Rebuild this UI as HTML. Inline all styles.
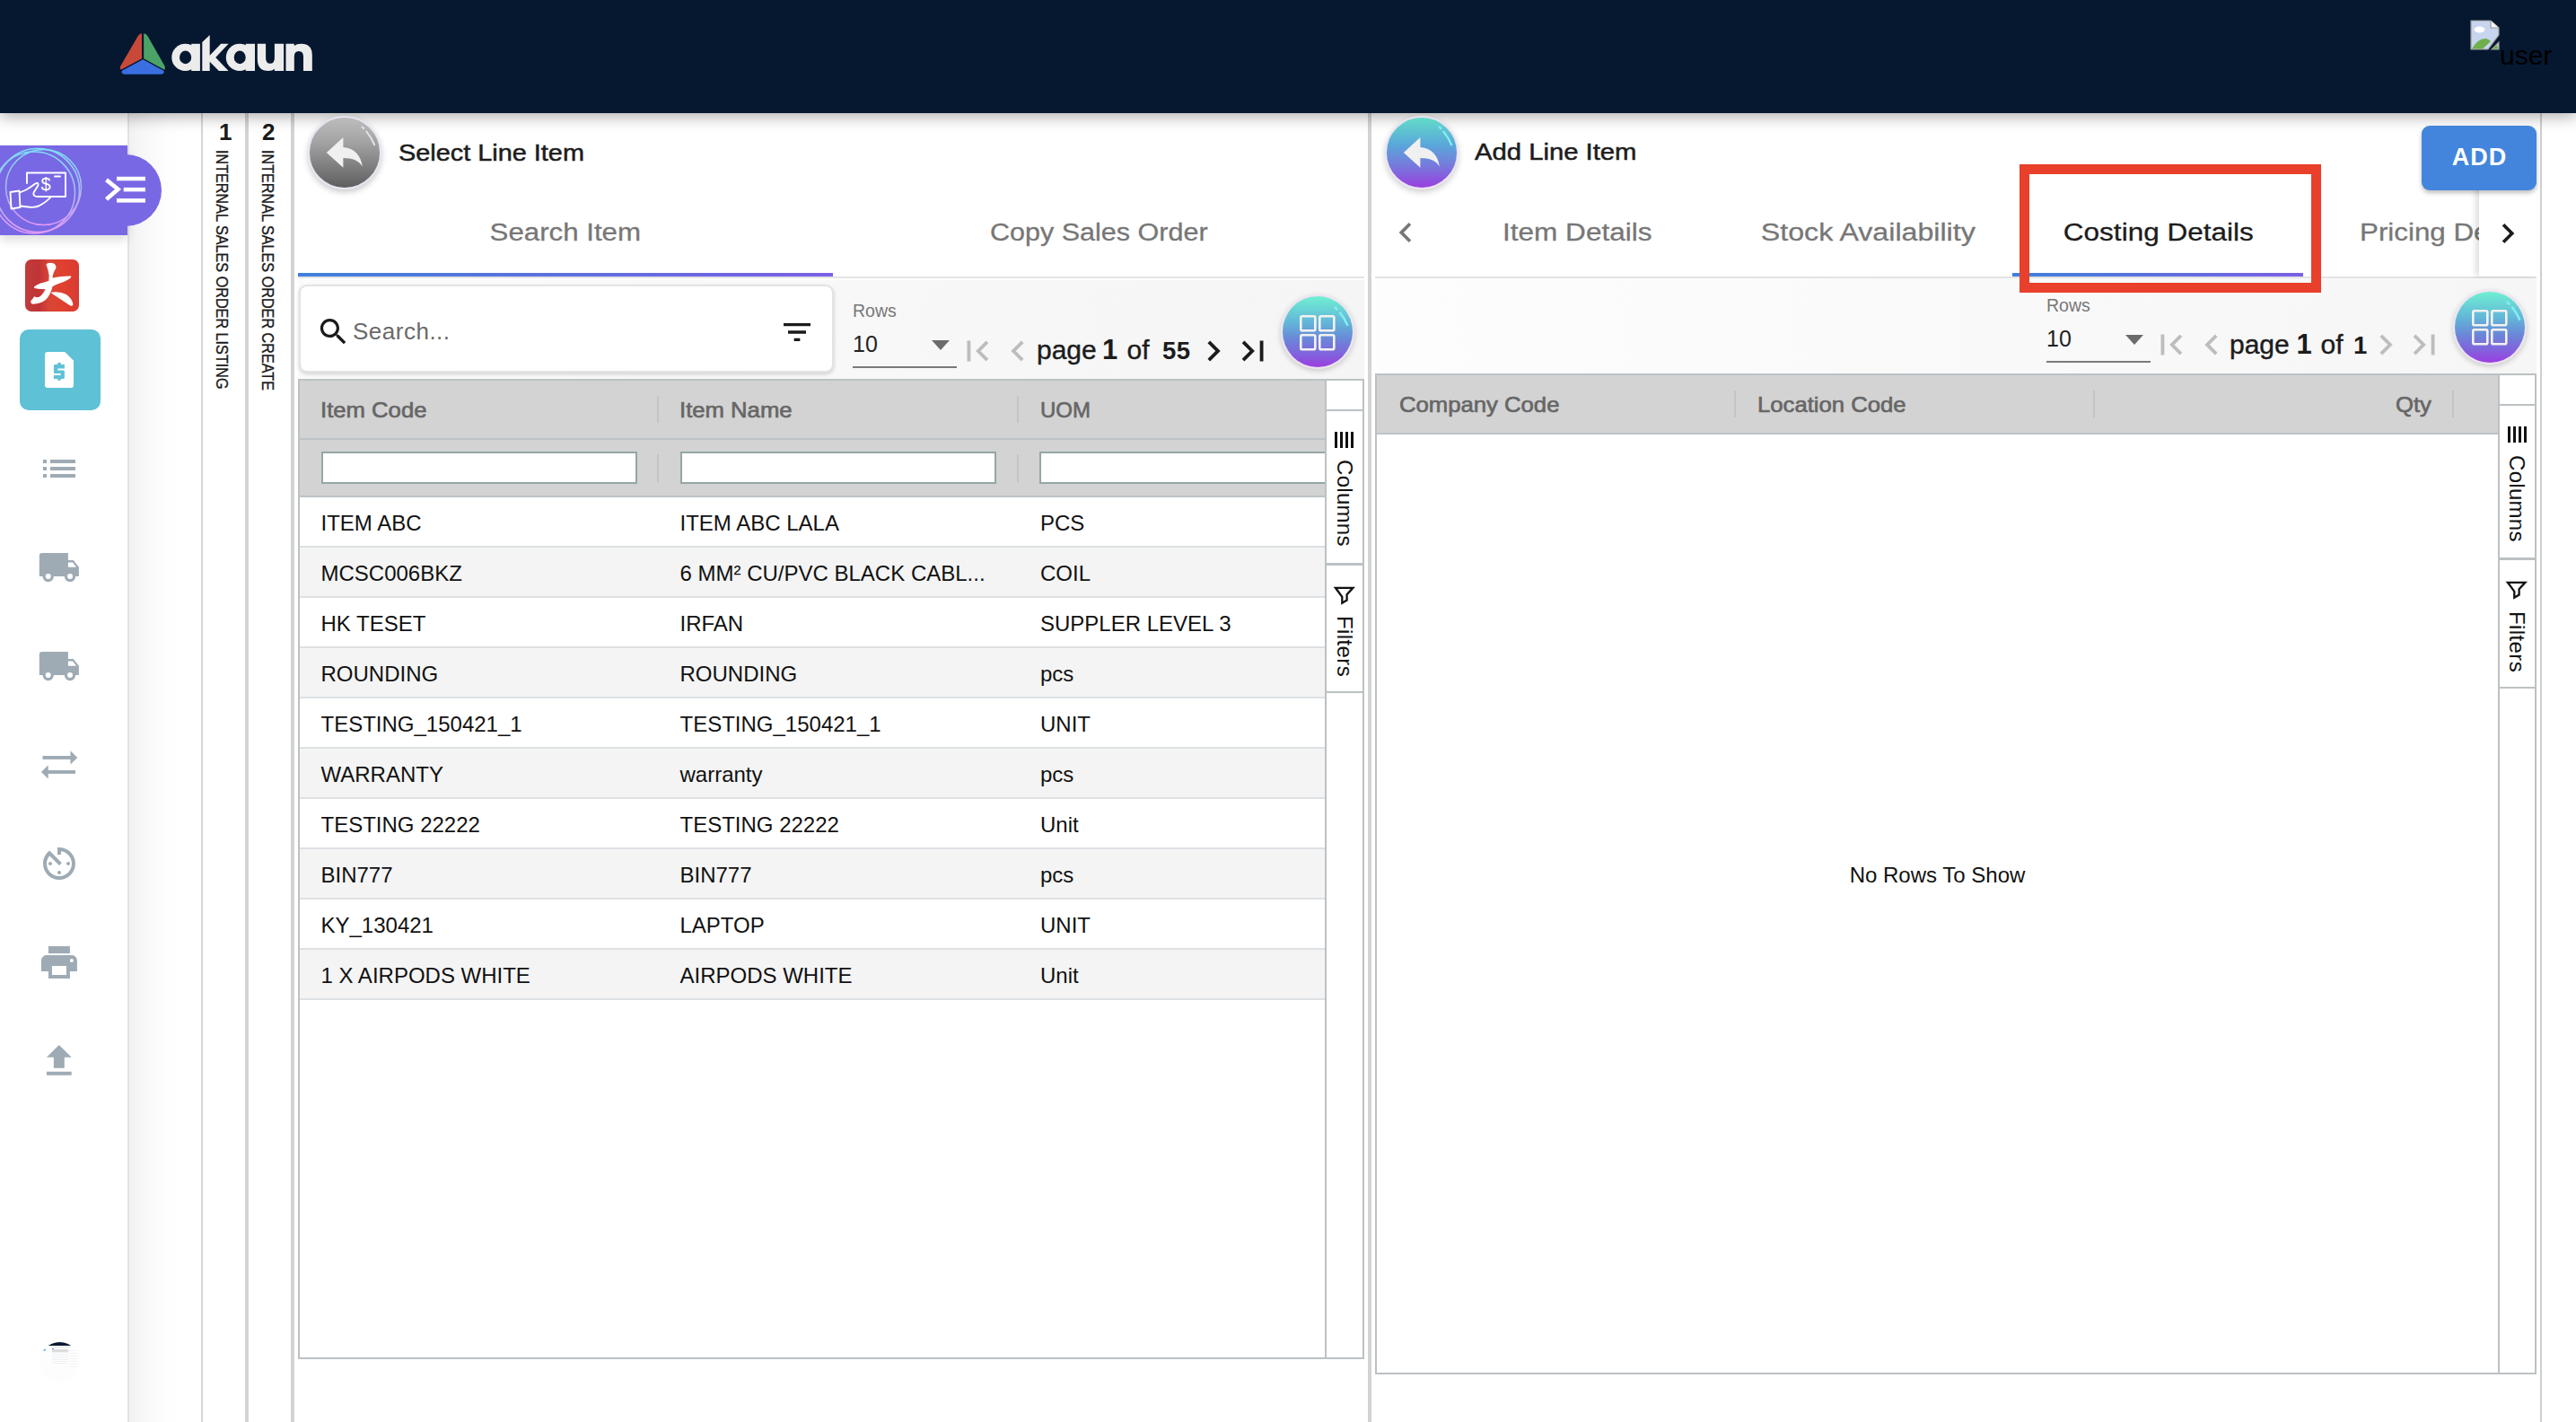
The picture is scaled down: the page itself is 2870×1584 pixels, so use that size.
<!DOCTYPE html>
<html><head><meta charset="utf-8">
<style>
*{box-sizing:border-box;margin:0;padding:0}
html,body{width:2870px;height:1584px;overflow:hidden;background:#fff;font-family:"Liberation Sans",sans-serif;position:relative}
.a{position:absolute}
.t{position:absolute;line-height:1;white-space:nowrap}
svg{display:block}
</style></head><body>

<!-- background columns -->
<div class="a" style="left:144px;top:126px;width:81px;height:1458px;background:linear-gradient(90deg,#f2f2f2 0,#f8f8f8 18px,#fdfdfd 40px,#fff 60px)"></div>
<div class="a" style="left:224px;top:126px;width:2px;height:1458px;background:#d6d6d6"></div>
<div class="a" style="left:273px;top:126px;width:4px;height:1458px;background:#d3d3d3"></div>
<div class="a" style="left:324px;top:126px;width:4px;height:1458px;background:#d3d3d3"></div>
<div class="a" style="left:1524px;top:126px;width:4px;height:1458px;background:#d3d3d3"></div>
<div class="a" style="left:2830px;top:126px;width:2px;height:1458px;background:#cfcfcf"></div>

<!-- sidebar -->
<div class="a" style="left:0;top:126px;width:144px;height:1458px;background:#fff;border-right:2px solid #e2e2e2"></div>

<!-- header -->
<div class="a" style="left:0;top:0;width:2870px;height:126px;background:#061830;box-shadow:0 4px 16px rgba(0,0,0,0.32)"></div>


<!-- logo -->
<svg class="a" style="left:125px;top:30px" width="235" height="60" viewBox="125 30 235 60">
<path fill="#c8493a" d="M158 37.2 L158 65.2 L135.2 77.6 Q133.3 77.2 134.2 73.8 L153.5 40.5 Q155.5 37.2 158 37.2 Z"/>
<path fill="#4ba466" d="M160.2 37.2 Q162.8 37.2 164.7 40.5 L183.6 73.8 Q184.4 77.2 182.8 77.6 L160.2 65.2 Z"/>
<path fill="#3a6fe2" d="M159.2 66.3 L182.3 78.7 Q183.5 80.2 182 81.8 Q180.8 82.8 178.5 82.8 H139.5 Q137.2 82.8 136.2 81.8 Q134.8 80.2 136 78.7 Z"/>
<g fill="#ececec" fill-rule="evenodd">
<circle cx="206.4" cy="63.9" r="15.1"/><rect x="213.2" y="48.8" width="9.7" height="30.2"/><ellipse cx="206.6" cy="63.9" rx="6.6" ry="7.3" fill="#061830"/>
<path d="M225.3 46.9 L233.7 39 V61.8 L246.2 48.8 H254.6 L240.2 64.1 L254.6 79 H243.9 L233.7 68.8 V79 H225.3 Z"/>
<circle cx="266.9" cy="63.9" r="15.1"/><rect x="273.7" y="48.8" width="10.3" height="30.2"/><ellipse cx="267.2" cy="63.9" rx="6.5" ry="7.3" fill="#061830"/>
<path d="M286.8 48.8 H296.1 V64.5 Q296.1 70.8 301 70.8 Q305.9 70.8 305.9 64.5 V48.8 H316.1 V79 H305.9 V76.8 Q303.5 79 299 79 Q286.8 79 286.8 66 Z"/>
<path d="M318.5 79 H327.8 V63.3 Q327.8 57 332.9 57 Q338 57 338 63.3 V79 H347.8 V61.5 Q347.8 48.8 335.5 48.8 Q330.5 48.8 327.8 51 V48.8 H318.5 Z"/>
</g>
</svg>
<!-- broken image + user -->
<svg class="a" style="left:2752px;top:22px" width="33" height="34" viewBox="0 0 33 34">
<path d="M1 1 H23 L32 9 V17 L20 33 H1 Z" fill="#c7d5ee" stroke="#9a9a9a" stroke-width="1.2"/>
<path d="M23 1 V9 H32" fill="#f4f4f4" stroke="#9a9a9a" stroke-width="1.2"/>
<path d="M24 33 L32 25 V33 Z" fill="#c7d5ee" stroke="#9a9a9a" stroke-width="1.2"/>
<ellipse cx="10.5" cy="11" rx="6" ry="3.5" fill="#fff"/>
<path d="M2 32.5 Q9 20 18 21 Q21 22 23 24 L14 32.5 Z" fill="#6faf4e"/>
<path d="M25 32.5 Q28 29 30 28 L31.5 32.5 Z" fill="#6faf4e"/>
</svg>
<div class="t" style="left:2785px;top:46.6px;font-size:30px;color:#000">user</div>


<!-- sidebar content -->
<div class="a" style="left:0;top:162px;width:142px;height:100px;background:#7868e4;box-shadow:0 6px 10px rgba(0,0,0,0.12)"></div>
<div class="a" style="left:100px;top:172px;width:80px;height:80px;background:#7868e4;border-radius:0 40px 40px 0"></div>
<svg class="a" style="left:0;top:162px" width="100" height="100" viewBox="0 0 100 100">
<defs><linearGradient id="rg" x1="0" y1="0" x2="0" y2="1"><stop offset="0" stop-color="#7fe0f8"/><stop offset="0.5" stop-color="#a8b8f4"/><stop offset="1" stop-color="#e49af6"/></linearGradient></defs>
<g fill="none" stroke="url(#rg)" stroke-width="1.6">
<circle cx="42" cy="50" r="46.5"/>
<circle cx="48.5" cy="46.5" r="42"/>
<circle cx="38" cy="52.5" r="45.5"/>
</g>
<g fill="none" stroke="#fff" stroke-width="1.9" stroke-linejoin="round" stroke-linecap="round">
<path d="M30 42 V30.5 H73 V57 H45"/>
<path d="M61 34.5 H67"/>
<path d="M11.5 52 L21.5 50.5 L22.5 69 L12.5 70.5 Z"/>
<path d="M22 52.5 L29 49.5 Q35 46 39.5 42.5 Q43 40.5 42.5 44.5 Q40 48.5 37.5 52.5 Q36.5 57 42 57 L57 57 Q52 63 43 67.5 Q38 69.5 31 68.5 L22.5 67.5"/>
</g>
<text x="45.5" y="50" font-family="Liberation Sans" font-size="20" fill="#fff">$</text>
</svg>
<svg class="a" style="left:117px;top:196px" width="46" height="32" viewBox="0 0 46 32">
<path d="M1.5 4.4 L14.5 14.8 L1.5 25.9" fill="none" stroke="#fff" stroke-width="4.6"/>
<rect x="13" y="0.8" width="32" height="4.5" fill="#fff"/>
<rect x="20.7" y="12.9" width="24.3" height="4.5" fill="#fff"/>
<rect x="13" y="25.1" width="32" height="4.5" fill="#fff"/>
</svg>

<!-- red app icon -->
<div class="a" style="left:28px;top:289px;width:60px;height:58px;border-radius:7px;background:linear-gradient(90deg,#c13c3b 0,#c03436 25%,#d84636 45%,#e0402f 70%,#d93b31 100%)"></div>
<svg class="a" style="left:28px;top:289px" width="60" height="58" viewBox="0 0 60 58">
<path fill="#fff" stroke="#fff" stroke-width="1.8" stroke-linejoin="round" d="M24.5 5.8 Q27 3.8 31 5 Q34 6.5 33.5 9.5 Q31 13 30 17 L29.6 21.8 Q38 19.2 50.5 19.3 Q48 22.5 39 25.5 Q33 27.5 29.8 29.5 Q27.5 39 22.5 44 Q17.5 48.5 8.5 48.8 Q6.5 48.2 7.3 46.5 Q9 45 10.5 42.3 Q12.5 44 16.5 42.3 Q21.5 39 24 31.5 Q17.5 32.8 10.8 31.2 Q14 28 20.5 26.6 L27.2 24.6 L27.6 17.5 Q26.5 10.5 24.5 5.8 Z"/><path fill="#fff" stroke="#fff" stroke-width="1.2" stroke-linejoin="round" d="M29.8 37.2 Q38.5 35.8 45.5 39.5 Q51.5 43.5 52.8 50 Q52.2 51.8 50.3 50.8 Q42 45.2 29.8 37.2 Z"/>
</svg>

<!-- active teal -->
<div class="a" style="left:22px;top:367px;width:90px;height:90px;border-radius:10px;background:#5ec1d6"></div>
<svg class="a" style="left:44px;top:388px" width="44" height="48" viewBox="44 388 44 48">
<path fill="#fff" d="M53 392 H72.3 L82 401.7 V429 Q82 432 79 432 H53 Q50 432 50 429 V395 Q50 392 53 392 Z"/>
<path fill="#5ec1d6" d="M64.3 404 H67.8 V405.9 H71.9 V410.4 H64.3 V412.4 H70.4 Q71.9 412.4 71.9 413.9 V420.4 Q71.9 421.9 70.4 421.9 H67.8 V423.7 H64.3 V421.9 H59.9 V417.9 H67.6 V416.1 H61.4 Q59.9 416.1 59.9 414.6 V407.4 Q59.9 405.9 61.4 405.9 H64.3 Z"/>
</svg>

<!-- gray sidebar icons -->
<svg class="a" style="left:42px;top:498px" width="48" height="48" viewBox="0 0 24 24"><path fill="#9eabb4" d="M3 13h2v-2H3v2zm0 4h2v-2H3v2zm0-8h2V7H3v2zm4 4h14v-2H7v2zm0 4h14v-2H7v2zM7 7v2h14V7H7z"/></svg>
<svg class="a" style="left:40px;top:612px" width="52" height="42" viewBox="0 0 52 42"><path fill="#9eabb4" d="M3.8 7 Q3.8 4 6.8 4 H35.9 V12 H41.8 L47.9 19.8 V29.9 H3.8 Z"/><path fill="#fff" d="M35.9 14.6 H41 L45 19.8 H35.9 Z"/><circle cx="13.7" cy="30" r="6.2" fill="#9eabb4"/><circle cx="38" cy="30" r="6.2" fill="#9eabb4"/><circle cx="13.7" cy="30" r="3" fill="#fff"/><circle cx="38" cy="30" r="3" fill="#fff"/></svg>
<svg class="a" style="left:40px;top:721.6px" width="52" height="42" viewBox="0 0 52 42"><path fill="#9eabb4" d="M3.8 7 Q3.8 4 6.8 4 H35.9 V12 H41.8 L47.9 19.8 V29.9 H3.8 Z"/><path fill="#fff" d="M35.9 14.6 H41 L45 19.8 H35.9 Z"/><circle cx="13.7" cy="30" r="6.2" fill="#9eabb4"/><circle cx="38" cy="30" r="6.2" fill="#9eabb4"/><circle cx="13.7" cy="30" r="3" fill="#fff"/><circle cx="38" cy="30" r="3" fill="#fff"/></svg>
<svg class="a" style="left:40px;top:830px" width="52" height="44" viewBox="40 830 52 44"><g fill="#9eabb4"><rect x="47.5" y="842" width="32" height="3.9"/><path d="M78.5 836.3 L86.2 843.95 L78.5 851.6 Z"/><rect x="53" y="858" width="31" height="3.9"/><path d="M53.7 852.3 L46 859.95 L53.7 867.6 Z"/></g></svg>
<svg class="a" style="left:42px;top:937.6px" width="48" height="48" viewBox="0 0 24 24"><path fill="#9eabb4" d="M11 17c0 .55.45 1 1 1s1-.45 1-1-.45-1-1-1-1 .45-1 1zm0-14v4h2V5.08c3.39.49 6 3.39 6 6.92 0 3.87-3.13 7-7 7s-7-3.13-7-7c0-1.68.59-3.22 1.58-4.42L12 13l1.41-1.41-6.8-6.8v.02C4.42 6.45 3 9.05 3 12c0 4.97 4.02 9 9 9 4.97 0 9-4.03 9-9s-4.03-9-9-9h-1zm7 9c0-.55-.45-1-1-1s-1 .45-1 1 .45 1 1 1 1-.45 1-1zM6 12c0 .55.45 1 1 1s1-.45 1-1-.45-1-1-1-1 .45-1 1z"/></svg>
<svg class="a" style="left:42px;top:1048px" width="47.9" height="47.9" viewBox="0 0 24 24"><path fill="#9eabb4" d="M19 8H5c-1.66 0-3 1.34-3 3v6h4v4h12v-4h4v-6c0-1.66-1.34-3-3-3zm-3 11H8v-5h8v5zm3-7c-.55 0-1-.45-1-1s.45-1 1-1 1 .45 1 1-.45 1-1 1zm-1-9H6v4h12V3z"/></svg>
<svg class="a" style="left:42.2px;top:1158.4px" width="47.6" height="47.6" viewBox="0 0 24 24"><path fill="#9eabb4" d="M9 16h6v-6h4l-7-7-7 7h4zm-4 2h14v2H5z"/></svg>

<!-- avatar -->
<div class="a" style="left:43.5px;top:1494.8px;width:45px;height:45px;border-radius:50%;overflow:hidden;background:#fdfdfd">
<div class="a" style="left:0;top:0;width:45px;height:4.3px;background:#0a1a34"></div>
<div class="a" style="left:14px;top:5px;width:20px;height:1.5px;background:#e3e6ea"></div>
<div class="a" style="left:2.5px;top:7.5px;width:4.5px;height:3px;border-radius:2px;background:#6cc6da"></div>
<div class="a" style="left:14px;top:7px;width:2px;height:2px;background:#6b9be2"></div>
<div class="a" style="left:14px;top:8.5px;width:18px;height:2.5px;background:#dcdcdc"></div>
<div class="a" style="left:14px;top:11px;width:18px;height:13px;background:repeating-linear-gradient(180deg,#eef0f4 0,#eef0f4 0.6px,#fff 0.6px,#fff 2px)"></div>
<div class="a" style="left:33px;top:9px;width:9px;height:20px;background:repeating-linear-gradient(180deg,#f1f2f4 0,#f1f2f4 0.6px,#fff 0.6px,#fff 3px)"></div>
</div>
<!-- vertical tabs -->
<div class="t" style="left:244px;top:134px;font-size:26px;font-weight:700;color:#1a1a1a">1</div>
<div class="t" style="left:292px;top:134px;font-size:26px;font-weight:700;color:#1a1a1a">2</div>
<div class="t" style="left:238px;top:167px;font-size:16.2px;color:#1a1a1a;writing-mode:vertical-rl;transform:scaleX(1.18);transform-origin:0 0;-webkit-text-stroke:0.3px #1a1a1a">INTERNAL SALES ORDER LISTING</div>
<div class="t" style="left:289px;top:167px;font-size:16.2px;color:#1a1a1a;writing-mode:vertical-rl;transform:scaleX(1.18);transform-origin:0 0;-webkit-text-stroke:0.3px #1a1a1a">INTERNAL SALES ORDER CREATE</div>


<!-- LEFT PANEL -->
<!-- back button -->
<div class="a" style="left:343px;top:129px;width:82px;height:82px;border-radius:50%;background:linear-gradient(180deg,#bdbdbd 0%,#a3a3a3 35%,#808080 68%,#5e5e5e 100%);border:2.5px solid #e9e3f1;box-shadow:0 3px 7px rgba(0,0,0,0.22)"></div>
<svg class="a" style="left:345px;top:131px" width="79" height="79" viewBox="0 0 79 79">
<path d="M58 10 Q67 18 72.5 31" fill="none" stroke="#e2e2e2" stroke-width="2" stroke-dasharray="4 3 40"/>
<path d="M37.4 22 L18.8 38.9 L37.4 55.8 V44.9 C48 44.9 55 48 58.8 54.4 C57 42 50 34 37.4 33 Z" fill="#f0f0f0"/>
</svg>
<div class="t" style="left:444px;top:156.5px;font-size:26px;color:#1c1c1c;-webkit-text-stroke:0.5px #1c1c1c;transform:scaleX(1.11);transform-origin:0 0">Select Line Item</div>

<!-- tabs -->
<div class="t" style="left:332px;top:246.1px;width:596px;text-align:center;font-size:27px;color:#777;-webkit-text-stroke:0.3px #777"><span style="display:inline-block;transform:scaleX(1.157)">Search Item</span></div>
<div class="t" style="left:928px;top:246.1px;width:592px;text-align:center;font-size:27px;color:#777;-webkit-text-stroke:0.3px #777"><span style="display:inline-block;transform:scaleX(1.130)">Copy Sales Order</span></div>
<div class="a" style="left:332px;top:308px;width:1188px;height:2px;background:#e3e3e3"></div>
<div class="a" style="left:332px;top:304px;width:596px;height:4px;background:linear-gradient(90deg,#3f80dc,#7b5fe6)"></div>

<!-- paginator area -->
<div class="a" style="left:332px;top:312px;width:1188px;height:110px;background:linear-gradient(90deg,#fbfbfb,#f5f5f5)"></div>
<div class="a" style="left:333px;top:317px;width:596px;height:98px;background:#fff;border-radius:9px;border:2px solid #e3e3e3;box-shadow:0 2px 4px rgba(0,0,0,0.16)"></div>
<svg class="a" style="left:352px;top:349.5px" width="39" height="39" viewBox="0 0 24 24"><path fill="#1a1a1a" d="M15.5 14h-.79l-.28-.27C15.41 12.59 16 11.11 16 9.5 16 5.91 13.09 3 9.5 3S3 5.91 3 9.5 5.91 16 9.5 16c1.61 0 3.09-.59 4.23-1.57l.27.28v.79l5 4.99L20.49 19l-4.99-5zm-6 0C7.01 14 5 11.99 5 9.5S7.01 5 9.5 5 14 7.01 14 9.5 11.99 14 9.5 14z"/></svg>
<div class="t" style="left:393px;top:355.5px;font-size:26px;color:#6a6a6a;letter-spacing:0.5px">Search...</div>
<svg class="a" style="left:868px;top:350px" width="40" height="40" viewBox="0 0 24 24"><path fill="#1a1a1a" d="M10 18h4v-2h-4v2zM3 6v2h18V6H3zm3 7h12v-2H6v2z"/></svg>

<div class="t" style="left:950px;top:336.8px;font-size:19.5px;color:#777">Rows</div>
<div class="t" style="left:950px;top:370.7px;font-size:25px;color:#222">10</div>
<svg class="a" style="left:1038px;top:379px" width="20" height="11" viewBox="0 0 20 11"><path d="M0 0 H20 L10 11 Z" fill="#6b6b6b"/></svg>
<div class="a" style="left:950px;top:408px;width:116px;height:2px;background:#7a7a7a"></div>
<svg class="a" style="left:1066px;top:368px" width="46" height="46" viewBox="0 0 24 24"><path fill="#bdbdbd" d="M18.41 16.59L13.82 12l4.59-4.59L17 6l-6 6 6 6zM6 6h2v12H6z"/></svg>
<svg class="a" style="left:1111px;top:368px" width="46" height="46" viewBox="0 0 24 24"><path fill="#bdbdbd" d="M15.41 7.41L14 6l-6 6 6 6 1.41-1.41L10.83 12z"/></svg>
<div class="t" style="left:1155px;top:374.6px;font-size:30px;color:#1c1c1c;-webkit-text-stroke:0.4px #1c1c1c">page</div>
<div class="t" style="left:1228px;top:373.8px;font-size:31px;font-weight:700;color:#1c1c1c">1</div>
<div class="t" style="left:1255.5px;top:374.6px;font-size:30px;color:#1c1c1c;-webkit-text-stroke:0.4px #1c1c1c">of</div>
<div class="t" style="left:1295px;top:377.1px;font-size:27.5px;font-weight:700;color:#1c1c1c;letter-spacing:0.5px">55</div>
<svg class="a" style="left:1328.5px;top:368px" width="46" height="46" viewBox="0 0 24 24"><path fill="#1c1c1c" d="M10 6L8.59 7.41 13.17 12l-4.58 4.59L10 18l6-6z"/></svg>
<svg class="a" style="left:1372.5px;top:368px" width="46" height="46" viewBox="0 0 24 24"><path fill="#1c1c1c" d="M5.59 7.41L10.18 12l-4.59 4.59L7 18l6-6-6-6zM16 6h2v12h-2z"/></svg>

<!-- grid fab -->
<div class="a" style="left:1427px;top:328px;width:82px;height:83px;border-radius:50%;background:linear-gradient(180deg,#70f0d2 0%,#62b4d8 38%,#6a88d8 60%,#7f66dc 80%,#9c3ee0 100%);border:2.5px solid #ebe4f1;box-shadow:0 2px 6px rgba(0,0,0,0.2)"></div>
<svg class="a" style="left:1428px;top:331px" width="80" height="80" viewBox="0 0 80 80">
<path d="M58.8 11 Q68 19 73.6 31.7" fill="none" stroke="#86ecf2" stroke-width="2.5" stroke-dasharray="5 3 40"/>
<g fill="none" stroke="#f5f2f0" stroke-width="2.6"><rect x="21.3" y="21.3" width="16" height="16" rx="1.5"/><rect x="42.3" y="21.3" width="16" height="16" rx="1.5"/><rect x="21.3" y="42.3" width="16" height="16" rx="1.5"/><rect x="42.3" y="42.3" width="16" height="16" rx="1.5"/></g>
</svg>

<!-- table -->
<div class="a" style="left:332px;top:422px;width:1188px;height:1092px;border:2px solid #bcc1c4;background:#fff"></div>
<div class="a" style="left:334px;top:424px;width:1143px;height:128px;background:#d3d3d3"></div>
<div class="a" style="left:334px;top:488px;width:1143px;height:2px;background:#bcc3c6"></div>
<div class="a" style="left:334px;top:552px;width:1143px;height:2px;background:#bcc3c6"></div>
<div class="a" style="left:732px;top:441px;width:2px;height:30px;background:#c4c4c4"></div>
<div class="a" style="left:1133px;top:441px;width:2px;height:30px;background:#c4c4c4"></div>
<div class="a" style="left:732px;top:506px;width:2px;height:31px;background:#c4c4c4"></div>
<div class="a" style="left:1133px;top:506px;width:2px;height:31px;background:#c4c4c4"></div>
<div class="t" style="left:356.5px;top:445.1px;font-size:24px;color:#666;-webkit-text-stroke:0.65px #666;transform:scaleX(1.07);transform-origin:0 0">Item Code</div>
<div class="t" style="left:756.5px;top:445.1px;font-size:24px;color:#666;-webkit-text-stroke:0.65px #666;transform:scaleX(1.07);transform-origin:0 0">Item Name</div>
<div class="t" style="left:1159px;top:445.1px;font-size:24px;color:#666;-webkit-text-stroke:0.65px #666;transform:scaleX(1.0);transform-origin:0 0">UOM</div>
<div class="a" style="left:358px;top:503px;width:352px;height:36px;background:#fff;border:2px solid #95a6a6"></div>
<div class="a" style="left:758px;top:503px;width:352px;height:36px;background:#fff;border:2px solid #95a6a6"></div>
<div class="a" style="left:1158px;top:503px;width:360px;height:36px;background:#fff;border:2px solid #95a6a6;border-right:none"></div>
<div class="a" style="left:334px;top:554px;width:1143px;height:54px;background:#fff"></div><div class="a" style="left:334px;top:608px;width:1143px;height:2px;background:#dde1e4"></div><div class="t" style="left:357.5px;top:570.7px;font-size:24px;color:#111">ITEM ABC</div><div class="t" style="left:757.5px;top:570.7px;font-size:24px;color:#111">ITEM ABC LALA</div><div class="t" style="left:1159px;top:570.7px;font-size:24px;color:#111">PCS</div><div class="a" style="left:334px;top:610px;width:1143px;height:54px;background:#f4f4f4"></div><div class="a" style="left:334px;top:664px;width:1143px;height:2px;background:#dde1e4"></div><div class="t" style="left:357.5px;top:626.7px;font-size:24px;color:#111">MCSC006BKZ</div><div class="t" style="left:757.5px;top:626.7px;font-size:24px;color:#111">6 MM² CU/PVC BLACK CABL...</div><div class="t" style="left:1159px;top:626.7px;font-size:24px;color:#111">COIL</div><div class="a" style="left:334px;top:666px;width:1143px;height:54px;background:#fff"></div><div class="a" style="left:334px;top:720px;width:1143px;height:2px;background:#dde1e4"></div><div class="t" style="left:357.5px;top:682.7px;font-size:24px;color:#111">HK TESET</div><div class="t" style="left:757.5px;top:682.7px;font-size:24px;color:#111">IRFAN</div><div class="t" style="left:1159px;top:682.7px;font-size:24px;color:#111">SUPPLER LEVEL 3</div><div class="a" style="left:334px;top:722px;width:1143px;height:54px;background:#f4f4f4"></div><div class="a" style="left:334px;top:776px;width:1143px;height:2px;background:#dde1e4"></div><div class="t" style="left:357.5px;top:738.7px;font-size:24px;color:#111">ROUNDING</div><div class="t" style="left:757.5px;top:738.7px;font-size:24px;color:#111">ROUNDING</div><div class="t" style="left:1159px;top:738.7px;font-size:24px;color:#111">pcs</div><div class="a" style="left:334px;top:778px;width:1143px;height:54px;background:#fff"></div><div class="a" style="left:334px;top:832px;width:1143px;height:2px;background:#dde1e4"></div><div class="t" style="left:357.5px;top:794.7px;font-size:24px;color:#111">TESTING_150421_1</div><div class="t" style="left:757.5px;top:794.7px;font-size:24px;color:#111">TESTING_150421_1</div><div class="t" style="left:1159px;top:794.7px;font-size:24px;color:#111">UNIT</div><div class="a" style="left:334px;top:834px;width:1143px;height:54px;background:#f4f4f4"></div><div class="a" style="left:334px;top:888px;width:1143px;height:2px;background:#dde1e4"></div><div class="t" style="left:357.5px;top:850.7px;font-size:24px;color:#111">WARRANTY</div><div class="t" style="left:757.5px;top:850.7px;font-size:24px;color:#111">warranty</div><div class="t" style="left:1159px;top:850.7px;font-size:24px;color:#111">pcs</div><div class="a" style="left:334px;top:890px;width:1143px;height:54px;background:#fff"></div><div class="a" style="left:334px;top:944px;width:1143px;height:2px;background:#dde1e4"></div><div class="t" style="left:357.5px;top:906.7px;font-size:24px;color:#111">TESTING 22222</div><div class="t" style="left:757.5px;top:906.7px;font-size:24px;color:#111">TESTING 22222</div><div class="t" style="left:1159px;top:906.7px;font-size:24px;color:#111">Unit</div><div class="a" style="left:334px;top:946px;width:1143px;height:54px;background:#f4f4f4"></div><div class="a" style="left:334px;top:1000px;width:1143px;height:2px;background:#dde1e4"></div><div class="t" style="left:357.5px;top:962.7px;font-size:24px;color:#111">BIN777</div><div class="t" style="left:757.5px;top:962.7px;font-size:24px;color:#111">BIN777</div><div class="t" style="left:1159px;top:962.7px;font-size:24px;color:#111">pcs</div><div class="a" style="left:334px;top:1002px;width:1143px;height:54px;background:#fff"></div><div class="a" style="left:334px;top:1056px;width:1143px;height:2px;background:#dde1e4"></div><div class="t" style="left:357.5px;top:1018.7px;font-size:24px;color:#111">KY_130421</div><div class="t" style="left:757.5px;top:1018.7px;font-size:24px;color:#111">LAPTOP</div><div class="t" style="left:1159px;top:1018.7px;font-size:24px;color:#111">UNIT</div><div class="a" style="left:334px;top:1058px;width:1143px;height:54px;background:#f4f4f4"></div><div class="a" style="left:334px;top:1112px;width:1143px;height:2px;background:#dde1e4"></div><div class="t" style="left:357.5px;top:1074.7px;font-size:24px;color:#111">1 X AIRPODS WHITE</div><div class="t" style="left:757.5px;top:1074.7px;font-size:24px;color:#111">AIRPODS WHITE</div><div class="t" style="left:1159px;top:1074.7px;font-size:24px;color:#111">Unit</div>
<!-- side bar -->
<div class="a" style="left:1476px;top:424px;width:42px;height:1088px;background:#fff;border-left:2px solid #bcc1c4"></div>
<div class="a" style="left:1477px;top:456px;width:41px;height:2px;background:#bcc1c4"></div>
<div class="a" style="left:1477px;top:627px;width:41px;height:3px;background:#bcc1c4"></div>
<div class="a" style="left:1477px;top:770px;width:41px;height:2px;background:#bcc1c4"></div>
<svg class="a" style="left:1487px;top:481px" width="21" height="18" viewBox="0 0 21 18"><g fill="#111"><rect x="0" y="0" width="3" height="18"/><rect x="6" y="0" width="3" height="18"/><rect x="12" y="0" width="3" height="18"/><rect x="18" y="0" width="3" height="18"/></g></svg>
<div class="t" style="left:1486px;top:512px;font-size:24px;color:#111;writing-mode:vertical-rl;letter-spacing:0.3px">Columns</div>
<svg class="a" style="left:1484px;top:651px" width="27" height="24" viewBox="0 0 27 24"><path d="M3.9 3.8 L23.4 3.8 L16.6 11.2 L16.6 17.5 L11.3 20.7 L11.3 13.8 Z" fill="none" stroke="#111" stroke-width="2.3" stroke-linejoin="miter"/></svg>
<div class="t" style="left:1486px;top:686px;font-size:24px;color:#111;writing-mode:vertical-rl;letter-spacing:0.4px">Filters</div>


<!-- RIGHT PANEL -->
<div class="a" style="left:1542.5px;top:129px;width:82px;height:82px;border-radius:50%;background:linear-gradient(180deg,#62dcc8 0%,#5aa6da 40%,#7a74dc 72%,#9a3ee0 100%);border:2.5px solid #e9e3f1;box-shadow:0 3px 7px rgba(0,0,0,0.2)"></div>
<svg class="a" style="left:1544.5px;top:131px" width="79" height="79" viewBox="0 0 79 79">
<path d="M58 10 Q67 18 72.5 31" fill="none" stroke="#84eef0" stroke-width="2.2" stroke-dasharray="4 3 40"/>
<path d="M37.4 22 L18.8 38.9 L37.4 55.8 V44.9 C48 44.9 55 48 58.8 54.4 C57 42 50 34 37.4 33 Z" fill="#f0f0f0"/>
</svg>
<div class="t" style="left:1643px;top:156.4px;font-size:26px;color:#1c1c1c;-webkit-text-stroke:0.5px #1c1c1c;transform:scaleX(1.125);transform-origin:0 0">Add Line Item</div>

<!-- tabs -->
<div class="a" style="left:1532px;top:308px;width:1294px;height:2px;background:#e3e3e3"></div>
<svg class="a" style="left:1544px;top:237px" width="44" height="44" viewBox="0 0 24 24"><path fill="#777" d="M15.41 7.41L14 6l-6 6 6 6 1.41-1.41L10.83 12z"/></svg>
<div class="a" style="left:1595px;top:200px;width:1167px;height:106px;overflow:hidden">
<div class="t" style="left:0;top:46.1px;width:324px;text-align:center;font-size:27px;color:#777;-webkit-text-stroke:0.3px #777"><span style="display:inline-block;transform:scaleX(1.168)">Item Details</span></div>
<div class="t" style="left:324px;top:46.1px;width:324px;text-align:center;font-size:27px;color:#777;-webkit-text-stroke:0.3px #777"><span style="display:inline-block;transform:scaleX(1.191)">Stock Availability</span></div>
<div class="t" style="left:648px;top:46.1px;width:324px;text-align:center;font-size:27px;color:#1c1c1c;-webkit-text-stroke:0.3px #1c1c1c"><span style="display:inline-block;transform:scaleX(1.167)">Costing Details</span></div>
<div class="t" style="left:1034px;top:46.1px;font-size:27px;color:#777;-webkit-text-stroke:0.3px #777"><span style="display:inline-block;transform:scaleX(1.160);transform-origin:0 0">Pricing Details</span></div>
</div>
<div class="a" style="left:2242px;top:304px;width:324px;height:4px;background:linear-gradient(90deg,#3f80dc,#7b5fe6)"></div>
<div class="a" style="left:2762px;top:200px;width:64px;height:108px;background:#fff;box-shadow:-4px 0 6px rgba(0,0,0,0.12)"></div>
<svg class="a" style="left:2772px;top:238px" width="44" height="44" viewBox="0 0 24 24"><path fill="#1c1c1c" d="M10 6L8.59 7.41 13.17 12l-4.58 4.59L10 18l6-6z"/></svg>


<!-- paginator area -->
<div class="a" style="left:1532px;top:310px;width:1294px;height:106px;background:linear-gradient(90deg,#fdfdfd,#f6f6f6)"></div>
<div class="t" style="left:2280px;top:330.7px;font-size:19.5px;color:#777">Rows</div>
<div class="t" style="left:2280px;top:364.8px;font-size:25px;color:#222">10</div>
<svg class="a" style="left:2368px;top:373px" width="20" height="11" viewBox="0 0 20 11"><path d="M0 0 H20 L10 11 Z" fill="#6b6b6b"/></svg>
<div class="a" style="left:2280px;top:402px;width:116px;height:2px;background:#7a7a7a"></div>
<svg class="a" style="left:2395.5px;top:361px" width="46" height="46" viewBox="0 0 24 24"><path fill="#bdbdbd" d="M18.41 16.59L13.82 12l4.59-4.59L17 6l-6 6 6 6zM6 6h2v12H6z"/></svg>
<svg class="a" style="left:2440.7px;top:361px" width="46" height="46" viewBox="0 0 24 24"><path fill="#bdbdbd" d="M15.41 7.41L14 6l-6 6 6 6 1.41-1.41L10.83 12z"/></svg>
<div class="t" style="left:2484px;top:368.6px;font-size:30px;color:#1c1c1c;-webkit-text-stroke:0.4px #1c1c1c">page</div>
<div class="t" style="left:2558.5px;top:367.8px;font-size:31px;font-weight:700;color:#1c1c1c">1</div>
<div class="t" style="left:2585.5px;top:368.6px;font-size:30px;color:#1c1c1c;-webkit-text-stroke:0.4px #1c1c1c">of</div>
<div class="t" style="left:2622px;top:371.1px;font-size:27.5px;font-weight:700;color:#1c1c1c">1</div>
<svg class="a" style="left:2635px;top:361px" width="46" height="46" viewBox="0 0 24 24"><path fill="#bdbdbd" d="M10 6L8.59 7.41 13.17 12l-4.58 4.59L10 18l6-6z"/></svg>
<svg class="a" style="left:2678.3px;top:361px" width="46" height="46" viewBox="0 0 24 24"><path fill="#bdbdbd" d="M5.59 7.41L10.18 12l-4.59 4.59L7 18l6-6-6-6zM16 6h2v12h-2z"/></svg>

<div class="a" style="left:2733px;top:322.5px;width:82px;height:83px;border-radius:50%;background:linear-gradient(180deg,#70f0d2 0%,#62b4d8 38%,#6a88d8 60%,#7f66dc 80%,#9c3ee0 100%);border:2.5px solid #ebe4f1;box-shadow:0 2px 6px rgba(0,0,0,0.2)"></div>
<svg class="a" style="left:2734px;top:325px" width="80" height="80" viewBox="0 0 80 80">
<path d="M58.8 11 Q68 19 73.6 31.7" fill="none" stroke="#86ecf2" stroke-width="2.5" stroke-dasharray="5 3 40"/>
<g fill="none" stroke="#f5f2f0" stroke-width="2.6"><rect x="21.3" y="21.3" width="16" height="16" rx="1.5"/><rect x="42.3" y="21.3" width="16" height="16" rx="1.5"/><rect x="21.3" y="42.3" width="16" height="16" rx="1.5"/><rect x="42.3" y="42.3" width="16" height="16" rx="1.5"/></g>
</svg>

<!-- right table -->
<div class="a" style="left:1532px;top:416px;width:1294px;height:1115px;border:2px solid #bcc1c4;background:#fff"></div>
<div class="a" style="left:1534px;top:418px;width:1249px;height:64px;background:#d3d3d3"></div>
<div class="a" style="left:1534px;top:482px;width:1249px;height:2px;background:#bcc3c6"></div>
<div class="a" style="left:1932px;top:435px;width:2px;height:30px;background:#c4c4c4"></div>
<div class="a" style="left:2332px;top:435px;width:2px;height:30px;background:#c4c4c4"></div>
<div class="a" style="left:2732px;top:435px;width:2px;height:30px;background:#c4c4c4"></div>
<div class="t" style="left:1558.5px;top:438.7px;font-size:24px;color:#666;-webkit-text-stroke:0.65px #666;transform:scaleX(1.07);transform-origin:0 0">Company Code</div>
<div class="t" style="left:1957.5px;top:438.7px;font-size:24px;color:#666;-webkit-text-stroke:0.65px #666;transform:scaleX(1.07);transform-origin:0 0">Location Code</div>
<div class="t" style="left:2669px;top:438.7px;font-size:24px;color:#666;-webkit-text-stroke:0.65px #666;transform:scaleX(1.07);transform-origin:0 0">Qty</div>
<div class="t" style="left:1534px;top:962.7px;width:1249px;text-align:center;font-size:24px;color:#111">No Rows To Show</div>

<div class="a" style="left:2783px;top:418px;width:41px;height:1111px;background:#fff;border-left:2px solid #bcc1c4"></div>
<div class="a" style="left:2783px;top:450px;width:41px;height:2px;background:#bcc1c4"></div>
<div class="a" style="left:2783px;top:621px;width:41px;height:3px;background:#bcc1c4"></div>
<div class="a" style="left:2783px;top:765px;width:41px;height:2px;background:#bcc1c4"></div>
<svg class="a" style="left:2794px;top:475px" width="21" height="18" viewBox="0 0 21 18"><g fill="#111"><rect x="0" y="0" width="3" height="18"/><rect x="6" y="0" width="3" height="18"/><rect x="12" y="0" width="3" height="18"/><rect x="18" y="0" width="3" height="18"/></g></svg>
<div class="t" style="left:2792px;top:507px;font-size:24px;color:#111;writing-mode:vertical-rl;letter-spacing:0.3px">Columns</div>
<svg class="a" style="left:2790px;top:645px" width="27" height="24" viewBox="0 0 27 24"><path d="M3.9 3.8 L23.4 3.8 L16.6 11.2 L16.6 17.5 L11.3 20.7 L11.3 13.8 Z" fill="none" stroke="#111" stroke-width="2.3" stroke-linejoin="miter"/></svg>
<div class="t" style="left:2792px;top:681px;font-size:24px;color:#111;writing-mode:vertical-rl;letter-spacing:0.4px">Filters</div>

<!-- ADD button -->
<div class="a" style="left:2698px;top:140px;width:128px;height:72px;border-radius:9px;background:#4385dc;box-shadow:0 3px 5px rgba(0,0,0,0.25)"></div>
<div class="t" style="left:2698.5px;top:162.1px;width:128px;text-align:center;font-size:27px;font-weight:700;color:#fff;letter-spacing:1px">ADD</div>

<!-- red highlight -->
<div class="a" style="left:2250px;top:183px;width:336px;height:143px;border:11px solid #e8402a"></div>
</body></html>
